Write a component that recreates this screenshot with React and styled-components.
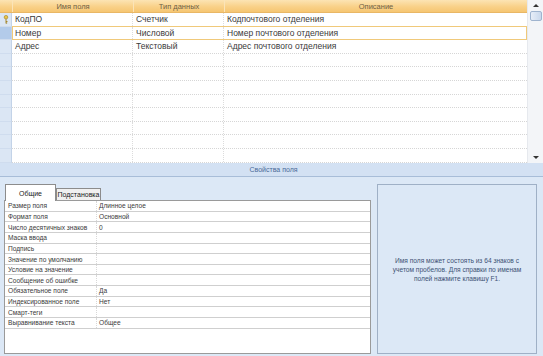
import React from "react";
import styled, { createGlobalStyle } from "styled-components";

const GlobalStyle = createGlobalStyle`
  body {
    margin: 0;
    background: #dce8f6;
    font-family: "Liberation Sans", Arial, sans-serif;
  }
`;

const Page = styled.div`
  width: 543px;
  height: 356px;
  display: flex;
  flex-direction: column;
  overflow: hidden;
  background: #dce8f6;
`;

const TopArea = styled.div`
  display: flex;
  height: 163px;
  background: #fff;
`;

const Table = styled.div`
  width: 528px;
  display: flex;
  flex-direction: column;
`;

const cols = "12px 121px 91px 1fr";

const HeaderRow = styled.div`
  display: grid;
  grid-template-columns: ${cols};
  height: 13px;
  background: linear-gradient(#fce4b4, #f9d189 55%, #f6c672);
  border-bottom: 1px solid #e9b765;
  box-sizing: border-box;
`;

const HeaderCell = styled.div`
  font-size: 7.5px;
  color: #6e5f45;
  display: flex;
  align-items: center;
  justify-content: center;
  border-left: ${(p) => (p.$first ? "none" : "1px solid #fbe4b8")};
`;

const Row = styled.div`
  display: grid;
  grid-template-columns: ${cols};
  height: 13.6px;
  box-sizing: border-box;
  position: relative;
  border-bottom: 1px dotted #d6d6d6;
`;

const Selector = styled.div`
  background: ${(p) => (p.$active ? "#b3cbea" : "#dbe6f4")};
  border-right: 1px solid #c3d3e8;
  border-bottom: 1px solid #cfdcee;
  margin-bottom: -1px;
  display: flex;
  align-items: center;
  justify-content: center;
`;

const Cell = styled.div`
  font-size: 8.5px;
  color: #3a3a3a;
  padding-left: 3px;
  display: flex;
  align-items: center;
  white-space: nowrap;
  border-right: ${(p) => (p.$last ? "none" : "1px dotted #dcdcdc")};
`;

const SelectedFrame = styled.div`
  position: absolute;
  left: 12px;
  right: 0;
  top: -1px;
  bottom: -1px;
  border: 1px solid #f0c97a;
  pointer-events: none;
`;

const Scrollbar = styled.div`
  width: 15px;
  background: #f3f5f8;
  border-left: 1px solid #e6e9ee;
  display: flex;
  flex-direction: column;
  align-items: center;
`;

const Arrow = styled.div`
  width: 0;
  height: 0;
  margin: 4px 0;
  border-left: 3px solid transparent;
  border-right: 3px solid transparent;
  ${(p) =>
    p.$down
      ? "border-top: 3px solid #333; margin-top: auto;"
      : "border-bottom: 3px solid #333;"}
`;

const Thumb = styled.div`
  width: 12px;
  height: 10px;
  box-sizing: border-box;
  border: 1px solid #9fb4cf;
  border-radius: 2px;
  background: linear-gradient(90deg, #e7eef8, #c9d8ec);
`;

const Band = styled.div`
  height: 14px;
  background: #d3e1f3;
  border-bottom: 1px solid #a8bdd8;
  box-sizing: border-box;
  font-size: 7px;
  color: #4a6a98;
  display: flex;
  align-items: center;
  justify-content: center;
  padding-left: 4px;
`;

const Bottom = styled.div`
  flex: 1;
  display: flex;
  padding: 6px 6px 2px 4px;
  gap: 6px;
`;

const LeftPane = styled.div`
  width: 367px;
  display: flex;
  flex-direction: column;
`;

const Tabs = styled.div`
  display: flex;
  align-items: flex-end;
  height: 17px;
  margin-left: 1px;
`;

const Tab = styled.div`
  font-size: 7px;
  color: #222;
  display: flex;
  align-items: center;
  justify-content: center;
  box-sizing: border-box;
  border: 1px solid #8c8c8c;
  border-bottom: none;
  background: ${(p) => (p.$active ? "#fff" : "#f0f0f0")};
  width: ${(p) => p.$w}px;
  height: ${(p) => (p.$active ? 17 : 12)}px;
  margin-bottom: ${(p) => (p.$active ? -1 : 0)}px;
  position: relative;
`;

const PropGrid = styled.div`
  flex: 1;
  background: #fff;
  border: 1px solid #9a9a9a;
  display: flex;
  flex-direction: column;
`;

const PropRow = styled.div`
  display: grid;
  grid-template-columns: 92px 1fr;
  height: 10.65px;
  box-sizing: border-box;
  border-bottom: 1px solid #cfcfcf;
`;

const PropName = styled.div`
  font-size: 6.6px;
  color: #3a3a3a;
  padding-left: 3px;
  display: flex;
  align-items: center;
  white-space: nowrap;
  overflow: hidden;
  border-right: 1px dotted #d8d8d8;
`;

const PropValue = styled.div`
  font-size: 6.6px;
  color: #3a3a3a;
  padding-left: 2px;
  display: flex;
  align-items: center;
`;

const HelpPane = styled.div`
  flex: 1;
  border: 1px solid #9fb0c6;
  margin-top: 1px;
  display: flex;
  align-items: center;
  justify-content: center;
  text-align: center;
  padding: 0 6px;
  font-size: 6.6px;
  line-height: 9px;
  color: #3d5274;
`;

const rows = [
  ["КодПО", "Счетчик", "Кодпочтового отделения"],
  ["Номер", "Числовой", "Номер почтового отделения"],
  ["Адрес", "Текстовый", "Адрес почтового отделения"],
];

const props = [
  ["Размер поля", "Длинное целое"],
  ["Формат поля", "Основной"],
  ["Число десятичных знаков", "0"],
  ["Маска ввода", ""],
  ["Подпись", ""],
  ["Значение по умолчанию", ""],
  ["Условие на значение", ""],
  ["Сообщение об ошибке", ""],
  ["Обязательное поле", "Да"],
  ["Индексированное поле", "Нет"],
  ["Смарт-теги", ""],
  ["Выравнивание текста", "Общее"],
];

const KeyIcon = () => (
  <svg width="6" height="9" viewBox="0 0 6 9">
    <circle cx="3" cy="2.2" r="1.8" fill="#e9c44a" stroke="#a07f1c" strokeWidth="0.6" />
    <path d="M3 4v4.5M3 6.5h1.5M3 8h1.2" stroke="#a07f1c" strokeWidth="0.9" />
  </svg>
);

export default function App() {
  const empty = Array.from({ length: 8 });
  return (
    <Page>
      <GlobalStyle />
      <TopArea>
        <Table>
          <HeaderRow>
            <HeaderCell $first />
            <HeaderCell>Имя поля</HeaderCell>
            <HeaderCell>Тип данных</HeaderCell>
            <HeaderCell>Описание</HeaderCell>
          </HeaderRow>
          {rows.map((r, i) => (
            <Row key={i}>
              <Selector $active={i === 1}>{i === 0 && <KeyIcon />}</Selector>
              <Cell>{r[0]}</Cell>
              <Cell>{r[1]}</Cell>
              <Cell $last>{r[2]}</Cell>
              {i === 1 && <SelectedFrame />}
            </Row>
          ))}
          {empty.map((_, i) => (
            <Row key={"e" + i}>
              <Selector />
              <Cell />
              <Cell />
              <Cell $last />
            </Row>
          ))}
        </Table>
        <Scrollbar>
          <Arrow />
          <Thumb />
          <Arrow $down />
        </Scrollbar>
      </TopArea>
      <Band>Свойства поля</Band>
      <Bottom>
        <LeftPane>
          <Tabs>
            <Tab $active $w={51}>Общие</Tab>
            <Tab $w={45}>Подстановка</Tab>
          </Tabs>
          <PropGrid>
            {props.map(([n, v]) => (
              <PropRow key={n}>
                <PropName>{n}</PropName>
                <PropValue>{v}</PropValue>
              </PropRow>
            ))}
          </PropGrid>
        </LeftPane>
        <HelpPane>
          Имя поля может состоять из 64 знаков с учетом пробелов. Для справки
          по именам полей нажмите клавишу F1.
        </HelpPane>
      </Bottom>
    </Page>
  );
}
